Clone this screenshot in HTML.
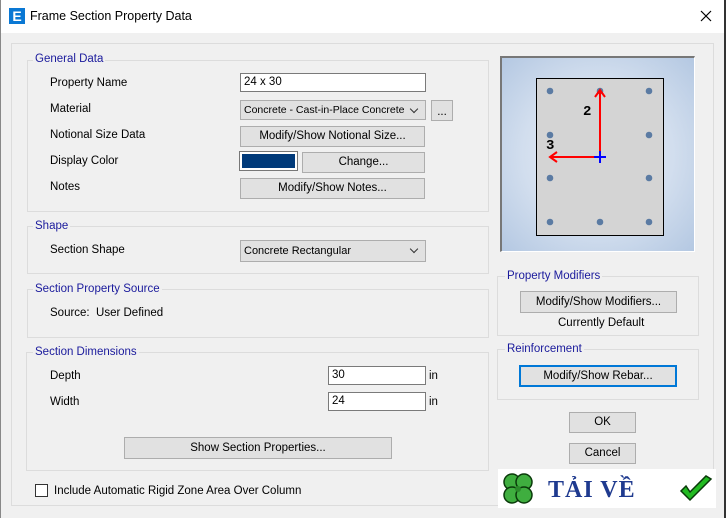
<!DOCTYPE html>
<html><head><meta charset="utf-8"><style>
*{box-sizing:border-box;margin:0;padding:0}
body{width:726px;height:518px;overflow:hidden;background:#f0f0f0;font-family:"Liberation Sans",sans-serif;font-size:11.5px;color:#000;position:relative}
.a{position:absolute}
.t{position:absolute;white-space:nowrap;line-height:14px}
.g{position:absolute;border:1px solid #dcdcdc}
.gl{position:absolute;background:#f0f0f0;color:#1a1a9c;padding:0 2px;line-height:14px;white-space:nowrap}
.btn{position:absolute;background:#e1e1e1;border:1px solid #adadad;text-align:center;line-height:18px;white-space:nowrap}
.in{position:absolute;background:#fff;border:1px solid #7a7a7a;padding-left:3px;line-height:16px}
.cb{position:absolute;background:#e1e1e1;border:1px solid #adadad;padding-left:3px;line-height:18px;font-size:11px;white-space:nowrap}
.cb:after{content:"";position:absolute;right:8px;top:5px;width:5px;height:5px;border-right:1px solid #333;border-bottom:1px solid #333;transform:rotate(45deg)}
</style></head><body>
<div class="a" style="left:0;top:0;width:726px;height:33px;background:#fff"></div>
<div class="a" style="left:9px;top:8px;width:16px;height:16px;background:#0a78d4;color:#fff;font-weight:bold;font-size:14px;line-height:16px;text-align:center">E</div>
<div class="t" style="left:30px;top:9px;font-size:12.5px">Frame Section Property Data</div>
<svg class="a" style="left:700px;top:10px" width="12" height="12"><path d="M1 1L11 11M11 1L1 11" stroke="#000" stroke-width="1.2"/></svg>
<div class="a" style="left:724px;top:0;width:2px;height:518px;background:#333"></div>
<div class="a" style="left:0;top:0;width:1px;height:518px;background:#888"></div>

<div class="g" style="left:11px;top:43px;width:703px;height:463px"></div>

<div class="g" style="left:27px;top:60px;width:462px;height:152px"></div>
<div class="gl" style="left:33px;top:52px">General Data</div>
<div class="t" style="left:50px;top:76px">Property Name</div>
<div class="in" style="left:240px;top:73px;width:186px;height:19px">24 x 30</div>
<div class="t" style="left:50px;top:102px">Material</div>
<div class="cb" style="left:240px;top:100px;width:186px;height:20px;font-size:10.5px">Concrete - Cast-in-Place Concrete</div>
<div class="btn" style="left:431px;top:100px;width:22px;height:21px;line-height:22px">...</div>
<div class="t" style="left:50px;top:128px">Notional Size Data</div>
<div class="btn" style="left:240px;top:126px;width:185px;height:21px">Modify/Show Notional Size...</div>
<div class="t" style="left:50px;top:154px">Display Color</div>
<div class="a" style="left:239px;top:151px;width:59px;height:20px;border:1px solid #777;background:#fff;padding:2px"><div style="width:100%;height:100%;background:#003a7a"></div></div>
<div class="btn" style="left:302px;top:152px;width:123px;height:21px">Change...</div>
<div class="t" style="left:50px;top:180px">Notes</div>
<div class="btn" style="left:240px;top:178px;width:185px;height:21px">Modify/Show Notes...</div>

<div class="g" style="left:27px;top:226px;width:462px;height:48px"></div>
<div class="gl" style="left:33px;top:219px">Shape</div>
<div class="t" style="left:50px;top:243px">Section Shape</div>
<div class="cb" style="left:240px;top:240px;width:186px;height:22px;line-height:20px">Concrete Rectangular</div>

<div class="g" style="left:27px;top:289px;width:462px;height:49px"></div>
<div class="gl" style="left:33px;top:282px">Section Property Source</div>
<div class="t" style="left:50px;top:306px">Source:&nbsp; User Defined</div>

<div class="g" style="left:26px;top:352px;width:463px;height:119px"></div>
<div class="gl" style="left:33px;top:345px">Section Dimensions</div>
<div class="t" style="left:50px;top:369px">Depth</div>
<div class="in" style="left:328px;top:366px;width:98px;height:19px">30</div>
<div class="t" style="left:429px;top:369px">in</div>
<div class="t" style="left:50px;top:395px">Width</div>
<div class="in" style="left:328px;top:392px;width:98px;height:19px">24</div>
<div class="t" style="left:429px;top:395px">in</div>
<div class="btn" style="left:124px;top:437px;width:268px;height:22px;line-height:20px">Show Section Properties...</div>

<div class="a" style="left:35px;top:484px;width:13px;height:13px;border:1px solid #333;background:#fff"></div>
<div class="t" style="left:54px;top:484px">Include Automatic Rigid Zone Area Over Column</div>

<div class="a" style="left:500px;top:56px;width:195px;height:196px;border-top:2px solid #777;border-left:2px solid #777;border-right:1px solid #fff;border-bottom:1px solid #fff;background:radial-gradient(circle at 50% 50%,#e8eef8 0%,#d2deee 55%,#b4c8e2 100%)"></div>
<div class="a" style="left:536px;top:78px;width:128px;height:158px;border:1px solid #000;background:#d4d4d4"></div>
<svg class="a" style="left:536px;top:78px" width="128" height="158">
<g fill="#5b7ba3">
<circle cx="14" cy="13" r="3.3"/><circle cx="64" cy="13" r="3.3"/><circle cx="113" cy="13" r="3.3"/>
<circle cx="14" cy="57" r="3.3"/><circle cx="113" cy="57" r="3.3"/>
<circle cx="14" cy="100" r="3.3"/><circle cx="113" cy="100" r="3.3"/>
<circle cx="14" cy="144" r="3.3"/><circle cx="64" cy="144" r="3.3"/><circle cx="113" cy="144" r="3.3"/>
</g>
<path d="M64 79V12M59 19L64 12L69 19M64 79H14M21 74L14 79L21 84" stroke="#f00" stroke-width="2" fill="none"/>
<path d="M58 79H70M64 73V85" stroke="#00f" stroke-width="2"/>
<text x="47" y="37" font-family="Liberation Mono,monospace" font-size="14" font-weight="bold">2</text>
<text x="10" y="71" font-family="Liberation Mono,monospace" font-size="14" font-weight="bold">3</text>
</svg>

<div class="g" style="left:497px;top:276px;width:202px;height:60px"></div>
<div class="gl" style="left:505px;top:269px">Property Modifiers</div>
<div class="btn" style="left:520px;top:291px;width:157px;height:22px;line-height:20px">Modify/Show Modifiers...</div>
<div class="t" style="left:558px;top:316px">Currently Default</div>
<div class="g" style="left:497px;top:349px;width:202px;height:51px"></div>
<div class="gl" style="left:505px;top:342px">Reinforcement</div>
<div class="btn" style="left:519px;top:365px;width:158px;height:22px;line-height:18px;border:2px solid #0078d7">Modify/Show Rebar...</div>

<div class="btn" style="left:569px;top:412px;width:67px;height:21px">OK</div>
<div class="btn" style="left:569px;top:443px;width:67px;height:21px">Cancel</div>

<div class="a" style="left:498px;top:469px;width:218px;height:39px;background:#fff"></div>
<svg class="a" style="left:500px;top:471px" width="36" height="36"><g fill="#3fae3f" stroke="#0a3a0a" stroke-width="1.5"><circle cx="12" cy="11" r="8"/><circle cx="24" cy="11" r="8"/><circle cx="12" cy="24" r="8"/><circle cx="24" cy="24" r="8"/></g><circle cx="18" cy="18" r="3" fill="#2a8a2a"/></svg>
<div class="t" style="left:548px;top:475px;font-family:'Liberation Serif',serif;font-weight:bold;font-size:24px;line-height:30px;color:#1f3a8f;letter-spacing:1px">TẢI VỀ</div>
<svg class="a" style="left:678px;top:475px" width="36" height="30"><path d="M3 16L12 25L33 4L28 1L12 17L8 11Z" fill="#22bb22" stroke="#0a3a0a" stroke-width="1.5"/></svg>
</body></html>
